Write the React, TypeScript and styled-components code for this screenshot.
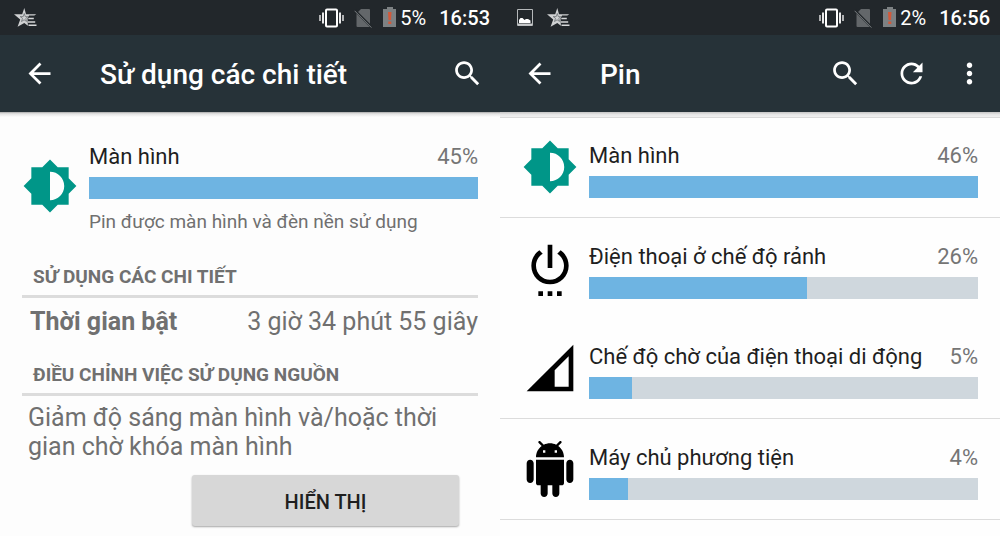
import React from "react";
import styled, { createGlobalStyle } from "styled-components";

const GlobalStyle = createGlobalStyle`
  *, *::before, *::after { box-sizing: border-box; }
  body { margin: 0; background: #fff; font-family: Roboto, "Noto Sans", sans-serif; color: #1f1f1f; }
  h1, h2, p, ul, dl, dd, dt { margin: 0; padding: 0; font-weight: 400; }
`;

const Page = styled.div`
  display: grid;
  grid-template-columns: 1fr 1fr;
  min-height: 100vh;
`;

const Screen = styled.section<{ $tint: string }>`
  display: flex;
  flex-direction: column;
  min-width: 0;
  background: ${(p) => p.$tint};
`;

const StatusBar = styled.div`
  display: flex;
  align-items: center;
  justify-content: space-between;
  height: 35px;
  padding: 0 10px 0 14px;
  background: #22272b;
  color: #fff;
`;

const StatusGroup = styled.div`
  display: flex;
  align-items: center;
  svg { display: block; flex: none; }
`;

const Notices = styled(StatusGroup)`
  gap: 12px;
`;

const Signals = styled(StatusGroup)`
  gap: 10px;
`;

const Battery = styled(StatusGroup)`
  gap: 3px;
  font-size: 20px;
  line-height: 24px;
`;

const Clock = styled.time`
  margin-left: 3px;
  font-size: 20px;
  line-height: 24px;
  font-weight: 500;
`;

const AppBar = styled.header`
  display: flex;
  align-items: center;
  height: 77px;
  background: #263238;
  color: #fff;
`;

const IconButton = styled.button<{ $width: number }>`
  display: flex;
  align-items: center;
  justify-content: center;
  flex: none;
  width: ${(p) => p.$width}px;
  height: 56px;
  padding: 0;
  border: 0;
  background: none;
  color: inherit;
  svg { display: block; }
`;

const OverflowButton = styled(IconButton)`
  margin-right: 6px;
`;

const Title = styled.h1`
  flex: 1;
  min-width: 0;
  padding: 2px 0 0 22px;
  font-size: 28px;
  line-height: 32px;
  font-weight: 500;
  white-space: nowrap;
`;

const Shade = styled.div<{ $lined?: boolean }>`
  height: 5px;
  background: ${(p) =>
    p.$lined
      ? "linear-gradient(#c4c4c4, #e6e6e6 50%, #f0f0f0)"
      : "linear-gradient(#a8a8a8, #e2e2e2 35%, #fdfdfd)"};
  box-shadow: ${(p) => (p.$lined ? "0 1px #d9d9d9" : "none")};
`;

const Details = styled.main`
  display: flex;
  flex-direction: column;
  padding: 27px 22px 8px;
  color: #707070;
`;

const Usage = styled.div`
  display: flex;
  gap: 11px;
`;

const UsageIcon = styled.svg`
  flex: none;
  margin-top: 14px;
`;

const UsageBody = styled.div`
  flex: 1;
  min-width: 0;
`;

const UsageHead = styled.div`
  display: flex;
  justify-content: space-between;
  font-size: 22px;
  line-height: 26px;
`;

const Name = styled.span`
  color: #1f1f1f;
`;

const Percent = styled.span`
  color: #757575;
`;

const Track = styled.div`
  height: 22px;
  margin-top: 7px;
  background: #cfd7dd;
`;

const Fill = styled.div`
  height: 100%;
  background: #6eb4e2;
`;

const Summary = styled.p`
  margin-top: 11px;
  font-size: 19px;
  line-height: 24px;
`;

const SectionTitle = styled.h2`
  padding: 0 11px 6px;
  border-bottom: 3px solid #dcdcdc;
  font-size: 19px;
  line-height: 24px;
  font-weight: 700;
`;

const UsageSection = styled.section`
  margin-top: 31px;
`;

const AdjustSection = styled.section`
  display: flex;
  flex-direction: column;
  margin-top: 26px;
`;

const Stat = styled.dl`
  display: flex;
  justify-content: space-between;
  margin-top: 9px;
  padding-left: 8px;
  font-size: 25px;
  line-height: 30px;
  dt { font-weight: 700; }
`;

const Advice = styled.p`
  max-width: 440px;
  margin-top: 7px;
  padding-left: 6px;
  font-size: 25px;
  line-height: 29px;
`;

const RaisedButton = styled.button`
  align-self: flex-end;
  width: 267px;
  height: 51px;
  margin: 14px 19px 0 0;
  padding: 2px 0 0;
  border: 0;
  border-radius: 3px;
  background: #d7d7d7;
  box-shadow: 0 1px 2px rgba(0, 0, 0, 0.35);
  color: #1f1f1f;
  font: 500 20px/24px Roboto, "Noto Sans", sans-serif;
`;

const UsageList = styled.ul`
  list-style: none;
`;

const UsageItem = styled.li<{ $divided: boolean }>`
  padding: 26px 22px 19px;
  border-bottom: ${(p) => (p.$divided ? "1px solid #dcdcdc" : "0")};
  ${UsageIcon} { margin-top: -4px; }
`;

const ItemUsage = styled(Usage)`
  height: 55px;
`;

const GLYPHS = {
  brightness:
    "M20 15.31 23.31 12 20 8.69V4h-4.69L12 .69 8.69 4H4v4.69L.69 12 4 15.31V20h4.69L12 23.31 15.31 20H20v-4.69zM12 18.1V5.9c3.400 0 6.100 2.700 6.100 6.100s-2.700 6.100-6.100 6.100z",
  power:
    "M7 24h2v-2H7v2zm4 0h2v-2h-2v2zm2-22h-2v10h2V2zm3.56 2.44-1.45 1.45C16.84 6.94 18 8.83 18 11c0 3.31-2.69 6-6 6s-6-2.69-6-6c0-2.17 1.16-4.06 2.88-5.12L7.44 4.44C5.36 5.88 4 8.28 4 11c0 4.42 3.58 8 8 8s8-3.58 8-8c0-2.72-1.36-5.12-3.44-6.56zM15 24h2v-2h-2v2z",
  cell: "M2 22h20V2L2 22zm18-2h-6v-7l6-6v13z",
  android:
    "M6 18c0 .55.45 1 1 1h1v3.5c0 .83.67 1.5 1.5 1.5s1.5-.67 1.5-1.5V19h2v3.5c0 .83.67 1.5 1.5 1.5s1.5-.67 1.5-1.5V19h1c.55 0 1-.45 1-1V8H6v10zM3.5 8C2.67 8 2 8.67 2 9.5v7c0 .83.67 1.5 1.5 1.5S5 17.33 5 16.5v-7C5 8.67 4.33 8 3.5 8zm17 0c-.83 0-1.5.67-1.5 1.5v7c0 .83.67 1.5 1.5 1.5s1.5-.67 1.5-1.5v-7c0-.83-.67-1.5-1.5-1.5zm-4.97-5.84 1.3-1.3c.2-.2.2-.51 0-.71-.2-.2-.51-.2-.71 0l-1.48 1.48C13.85 1.23 12.95 1 12 1c-.96 0-1.86.23-2.66.63L7.85.15c-.2-.2-.51-.2-.71 0-.2.2-.2.51 0 .71l1.31 1.31C6.97 3.26 6 5.01 6 7h12c0-1.99-.97-3.75-2.47-4.84zM10 5H9V4h1v1zm5 0h-1V4h1v1z",
  back: "M20 11H7.83l5.59-5.59L12 4l-8 8 8 8 1.41-1.41L7.83 13H20v-2z",
  search:
    "M15.5 14h-.79l-.28-.27C15.41 12.59 16 11.11 16 9.5 16 5.91 13.09 3 9.5 3S3 5.91 3 9.5 5.91 16 9.5 16c1.61 0 3.09-.59 4.23-1.57l.27.28v.79l5 4.99L20.49 19l-4.99-5zm-6 0C7.01 14 5 11.99 5 9.5S7.01 5 9.5 5 14 7.01 14 9.5 11.99 14 9.5 14z",
  refresh:
    "M17.65 6.35C16.2 4.9 14.21 4 12 4c-4.42 0-7.99 3.58-7.99 8s3.57 8 7.99 8c3.73 0 6.84-2.55 7.73-6h-2.08c-.82 2.33-3.04 4-5.65 4-3.31 0-6-2.69-6-6s2.69-6 6-6c1.66 0 3.14.69 4.22 1.78L13 11h7V4l-2.35 2.35z",
  more: "M12 8c1.1 0 2-.9 2-2s-.9-2-2-2-2 .9-2 2 .9 2 2 2zm0 2c-1.1 0-2 .9-2 2s.9 2 2 2 2-.9 2-2-.9-2-2-2zm0 6c-1.1 0-2 .9-2 2s.9 2 2 2 2-.9 2-2-.9-2-2-2z",
};

type GlyphName = keyof typeof GLYPHS;

const BarGlyph = ({ name }: { name: GlyphName }) => (
  <svg width="33" height="33" viewBox="0 0 24 24" fill="currentColor" aria-hidden="true">
    <path d={GLYPHS[name]} />
  </svg>
);

const StarGlyph = () => (
  <svg width="23" height="21" viewBox="0 0 23 21" aria-hidden="true">
    <path
      d="M10.300 1 12 7.300h10.300l-2 1.200h-5.200l-1.600 2.500.4 7.800-3.600-2.900-6.700 3.900 2.600-7.300L0 7.300h8.200z"
      fill="#cfd1d2"
    />
    <path d="m10.300 6.500 1 3.100h2.400l-1.900 1.800.7 3-2.400-1.600-2.600 1.700 1-3.200-2.300-1.700h3z" fill="none" stroke="#6b7073" strokeWidth="0.8" />
    <path d="M14.300 11.500h5.500M14 15h7.200M14.500 18.300h8" stroke="#d6d8d9" strokeWidth="1.500" />
  </svg>
);

const PictureGlyph = () => (
  <svg width="21" height="17" viewBox="0 0 21 17" aria-hidden="true">
    <path d="M3.500.5h15v16h-15z" fill="none" stroke="#b5b8ba" />
    <path d="M4 15.500h14" stroke="#c9cbcc" strokeWidth="2" />
    <path d="M5 14v-3l1.500-2h2l2 2 1.500-1h2l2.500 1.500V14z" fill="#fff" />
  </svg>
);

const VibrateGlyph = () => (
  <svg width="25" height="20" viewBox="0 0 25 20" aria-hidden="true">
    <rect x="7" y="1.500" width="11" height="17" rx="1" fill="none" stroke="#fff" strokeWidth="2" />
    <path d="M1 7v6M24 7v6" stroke="#dfe0e1" strokeWidth="1.500" />
    <path d="M4 4.500v11M21 4.500v11" stroke="#fff" strokeWidth="1.800" />
  </svg>
);

const NoSimGlyph = () => (
  <svg width="19" height="20" viewBox="0 0 19 20" aria-hidden="true">
    <path d="M7 1h8a1 1 0 0 1 1 1v16a1 1 0 0 1-1 1H3.500a1 1 0 0 1-1-1V5.500z" fill="#63676a" />
    <path d="m1 2.500 17 17" stroke="#22272b" strokeWidth="2.400" />
    <path d="m.6 2.800 16.800 16.800" stroke="#7a7e80" strokeWidth="1" />
  </svg>
);

const BatteryGlyph = () => (
  <svg width="14" height="21" viewBox="0 0 14 21" aria-hidden="true">
    <path d="M4 0h6v2h3v18H0V2h4z" fill="#7d8183" />
    <path d="M5 5h3.500l-.5 8H5.500zM5.300 14.500h3V17h-3z" fill="#d2593a" />
  </svg>
);

const StatusIcons = ({ level, time }: { level: string; time: string }) => (
  <Signals>
    <VibrateGlyph />
    <NoSimGlyph />
    <Battery>
      <BatteryGlyph />
      <span>{level}</span>
    </Battery>
    <Clock>{time}</Clock>
  </Signals>
);

interface UsageMeterProps {
  name: string;
  percent: number;
  fill: number;
}

const UsageMeter = ({ name, percent, fill }: UsageMeterProps) => (
  <>
    <UsageHead>
      <Name>{name}</Name>
      <Percent>{percent}%</Percent>
    </UsageHead>
    <Track role="progressbar" aria-label={name} aria-valuenow={percent} aria-valuemin={0} aria-valuemax={100}>
      <Fill style={{ width: `${fill}%` }} />
    </Track>
  </>
);

const PartIcon = ({ name, color }: { name: GlyphName; color: string }) => (
  <UsageIcon width="56" height="56" viewBox="0 0 24 24" fill={color} fillRule="evenodd" aria-hidden="true">
    <path d={GLYPHS[name]} />
  </UsageIcon>
);

interface Part {
  icon: GlyphName;
  color: string;
  name: string;
  percent: number;
  /** Bar length relative to the heaviest consumer. */
  fill: number;
  divided: boolean;
}

const PARTS: Part[] = [
  { icon: "brightness", color: "#009688", name: "Màn hình", percent: 46, fill: 100, divided: true },
  { icon: "power", color: "#000", name: "Điện thoại ở chế độ rảnh", percent: 26, fill: 56, divided: false },
  { icon: "cell", color: "#000", name: "Chế độ chờ của điện thoại di động", percent: 5, fill: 11, divided: true },
  { icon: "android", color: "#000", name: "Máy chủ phương tiện", percent: 4, fill: 10, divided: true },
];

const DetailScreen = () => (
  <Screen $tint="#fdfdfd">
    <StatusBar>
      <Notices>
        <StarGlyph />
      </Notices>
      <StatusIcons level="5%" time="16:53" />
    </StatusBar>
    <AppBar>
      <IconButton $width={78} aria-label="Quay lại">
        <BarGlyph name="back" />
      </IconButton>
      <Title>Sử dụng các chi tiết</Title>
      <IconButton $width={66} aria-label="Tìm kiếm">
        <BarGlyph name="search" />
      </IconButton>
    </AppBar>
    <Shade />
    <Details>
      <Usage>
        <PartIcon name="brightness" color="#009688" />
        <UsageBody>
          <UsageMeter name="Màn hình" percent={45} fill={100} />
          <Summary>Pin được màn hình và đèn nền sử dụng</Summary>
        </UsageBody>
      </Usage>
      <UsageSection>
        <SectionTitle>SỬ DỤNG CÁC CHI TIẾT</SectionTitle>
        <Stat>
          <dt>Thời gian bật</dt>
          <dd>3 giờ 34 phút 55 giây</dd>
        </Stat>
      </UsageSection>
      <AdjustSection>
        <SectionTitle>ĐIỀU CHỈNH VIỆC SỬ DỤNG NGUỒN</SectionTitle>
        <Advice>Giảm độ sáng màn hình và/hoặc thời gian chờ khóa màn hình</Advice>
        <RaisedButton>HIỂN THỊ</RaisedButton>
      </AdjustSection>
    </Details>
  </Screen>
);

const BatteryScreen = () => (
  <Screen $tint="#fefefe">
    <StatusBar>
      <Notices>
        <PictureGlyph />
        <StarGlyph />
      </Notices>
      <StatusIcons level="2%" time="16:56" />
    </StatusBar>
    <AppBar>
      <IconButton $width={78} aria-label="Quay lại">
        <BarGlyph name="back" />
      </IconButton>
      <Title>Pin</Title>
      <IconButton $width={66} aria-label="Tìm kiếm">
        <BarGlyph name="search" />
      </IconButton>
      <IconButton $width={66} aria-label="Làm mới">
        <BarGlyph name="refresh" />
      </IconButton>
      <OverflowButton $width={50} aria-label="Tùy chọn khác">
        <BarGlyph name="more" />
      </OverflowButton>
    </AppBar>
    <Shade $lined />
    <UsageList>
      {PARTS.map((part) => (
        <UsageItem key={part.name} $divided={part.divided}>
          <ItemUsage>
            <PartIcon name={part.icon} color={part.color} />
            <UsageBody>
              <UsageMeter name={part.name} percent={part.percent} fill={part.fill} />
            </UsageBody>
          </ItemUsage>
        </UsageItem>
      ))}
    </UsageList>
  </Screen>
);

export default function App() {
  return (
    <>
      <GlobalStyle />
      <Page>
        <DetailScreen />
        <BatteryScreen />
      </Page>
    </>
  );
}
